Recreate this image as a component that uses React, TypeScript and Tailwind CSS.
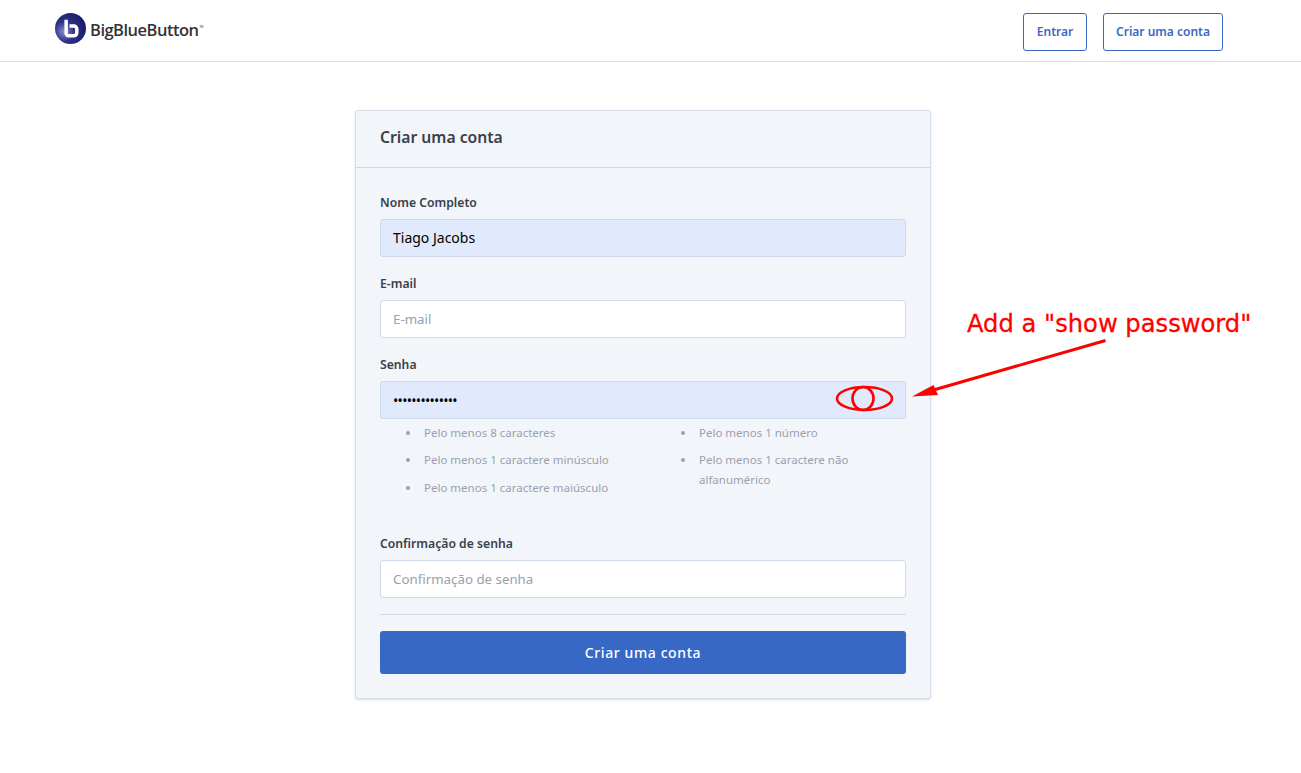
const fieldClass =
  'block h-[38px] w-full rounded-[3px] border border-[#d0d9e8] px-3 text-[14px] text-black outline-none placeholder:text-[13.3px] placeholder:text-[#9aa1ad]';

function Logo() {
  return (
    <div className="flex items-center gap-[4px]">
      <svg width="31" height="31" viewBox="0 0 32 32">
        <defs>
          <radialGradient id="ball" cx="0.3" cy="0.6" r="0.8">
            <stop offset="0" stopColor="#8d92cf" />
            <stop offset="0.4" stopColor="#2e3289" />
            <stop offset="1" stopColor="#14175c" />
          </radialGradient>
        </defs>
        <circle cx="16" cy="16" r="16" fill="url(#ball)" />
        <path
          d="M11.5 7v14a2.5 2.5 0 0 0 2.5 2.5h5.5a3 3 0 0 0 3-3v-4a3 3 0 0 0-3-3h-4.5"
          fill="none"
          stroke="#ffffff"
          strokeWidth="3.6"
        />
      </svg>
      <span className="mt-[4px] font-['Open_Sans',sans-serif] text-[16.5px] font-semibold tracking-[-0.5px] text-[#333333]">
        BigBlueButton
        <sup className="ml-px align-super text-[3px] font-normal">TM</sup>
      </span>
    </div>
  );
}

function Field({ label, children }: { label: string; children: React.ReactNode }) {
  return (
    <div>
      <label className="mb-[6px] block text-[12.2px] leading-[21px] font-semibold text-[#3a4048]">{label}</label>
      {children}
    </div>
  );
}

function Hint({ children }: { children: React.ReactNode }) {
  return <li className="mb-[7px] pl-[3px]">{children}</li>;
}

export default function App() {
  return (
    <div className="relative min-h-screen overflow-hidden bg-white font-['Noto_Sans',sans-serif]">
      <header className="flex h-[62px] items-start justify-between border-b border-[#dcdde6] pt-[13px] pr-[78px] pl-[55px]">
        <Logo />
        <div className="flex gap-4">
          <button className="h-[38px] w-[64px] rounded-[3px] border border-[#3868c5] text-[12px] font-semibold text-[#3868c5]">
            Entrar
          </button>
          <button className="h-[38px] w-[120px] rounded-[3px] border border-[#3868c5] text-[12px] font-semibold text-[#3868c5]">
            Criar uma conta
          </button>
        </div>
      </header>

      <main className="flex justify-center pt-12 pr-[15px] pb-16">
        <div className="w-[576px] rounded-[3px] border border-[#d6dee9] bg-[#f2f5fa] shadow-sm">
          <div className="flex h-[57px] items-center border-b border-[#cfd8e6] px-6 pb-[2px]">
            <h1 className="text-[15.7px] font-semibold text-[#3a4048]">Criar uma conta</h1>
          </div>
          <form className="px-6 pt-6 pb-[24px]">
            <div className="space-y-4">
              <Field label="Nome Completo">
                <input className={`${fieldClass} bg-[#e1eafc] pb-[2px]`} defaultValue="Tiago Jacobs" />
              </Field>
              <Field label="E-mail">
                <input className={`${fieldClass} bg-white pb-[2px]`} placeholder="E-mail" />
              </Field>
              <Field label="Senha">
                <input
                  type="password"
                  className={`${fieldClass} bg-[#e1eafc] tracking-[-0.7px]`}
                  defaultValue="abcdefghijklmn"
                />
              </Field>
            </div>
            <div className="grid grid-cols-[275px_1fr] pt-1 text-[11.5px] leading-[20px] text-[#9aa1ad]">
              <ul className="list-disc pl-[41px]">
                <Hint>Pelo menos 8 caracteres</Hint>
                <Hint>Pelo menos 1 caractere minúsculo</Hint>
                <li className="mt-[8px] pl-[3px]">Pelo menos 1 caractere maiúsculo</li>
              </ul>
              <ul className="list-disc pl-[41px]">
                <Hint>Pelo menos 1 número</Hint>
                <Hint>Pelo menos 1 caractere não alfanumérico</Hint>
              </ul>
            </div>
            <div className="mt-[35px]">
              <Field label="Confirmação de senha">
                <input className={`${fieldClass} bg-white pb-[2px]`} placeholder="Confirmação de senha" />
              </Field>
            </div>
            <hr className="mt-4 mb-4 border-[#cfd8e6]" />
            <button
              type="button"
              className="h-[43px] w-full rounded-[3px] bg-[#3868c5] text-[14px] font-medium tracking-[0.6px] text-white"
            >
              Criar uma conta
            </button>
          </form>
        </div>
      </main>

      {/* red annotation drawn over the screenshot */}
      <span className="absolute top-[308px] left-[967px] font-['DejaVu_Sans',sans-serif] text-[24.2px] leading-[32px] whitespace-nowrap text-[#ff0000] [-webkit-text-stroke:0.3px_#ff0000]">
        Add a "show password"
      </span>
      <svg className="pointer-events-none absolute top-0 left-0" width="1301" height="773" fill="none" stroke="#ff0000">
        <ellipse cx="864.5" cy="398.5" rx="27.5" ry="11.5" strokeWidth="2.6" />
        <ellipse cx="863" cy="398.5" rx="10.5" ry="11.5" strokeWidth="2.6" />
        <path d="M1105.5 340.5L930 391" strokeWidth="3" />
        <path d="M912 396.5L933.5 385L938 395Z" fill="#ff0000" stroke="none" />
      </svg>
    </div>
  );
}
